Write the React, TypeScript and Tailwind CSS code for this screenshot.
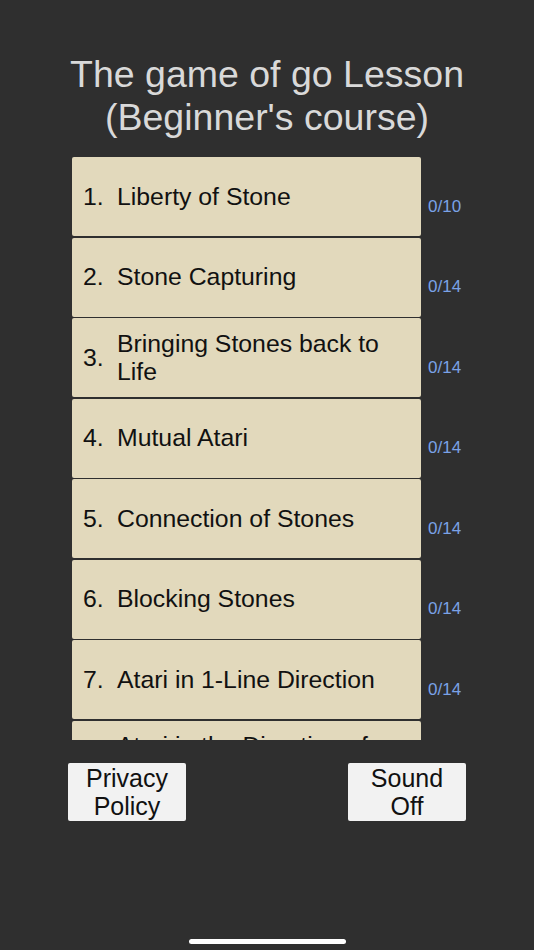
import React from 'react';

const LESSONS = [
  { no: 1, title: 'Liberty of Stone', progress: '0/10' },
  { no: 2, title: 'Stone Capturing', progress: '0/14' },
  { no: 3, title: 'Bringing Stones back to Life', progress: '0/14' },
  { no: 4, title: 'Mutual Atari', progress: '0/14' },
  { no: 5, title: 'Connection of Stones', progress: '0/14' },
  { no: 6, title: 'Blocking Stones', progress: '0/14' },
  { no: 7, title: 'Atari in 1-Line Direction', progress: '0/14' },
  { no: 8, title: 'Atari in the Direction of Escape', progress: '0/14' },
];

function App() {
  return (
    <div className="min-h-[950px] w-full bg-[#2f2f2f] font-['Liberation_Sans',Arial,sans-serif] flex flex-col">
      <h1 className="pt-[53px] text-center text-[37.5px] leading-[43px] text-[#d9d9d9]">
        The game of go Lesson
        <br />
        (Beginner's course)
      </h1>

      <div className="mt-[18px] ml-[72px] h-[583px] w-[420px] overflow-hidden">
        <div className="flex flex-col gap-[1.5px]">
          {LESSONS.map((lesson) => (
            <div key={lesson.no} className="flex">
              <button className="flex h-[79px] w-[349px] shrink-0 items-center rounded-[2px] bg-[#e2d9bc] pl-[11px] pr-3 text-left text-[24.8px] leading-[28px] text-[#111]">
                <span className="w-[34px] shrink-0">{lesson.no}.</span>
                <span>{lesson.title}</span>
              </button>
              <span className="self-center pt-[19px] pl-[7px] text-[17px] leading-[19px] text-[#7aa2e6]">
                {lesson.progress}
              </span>
            </div>
          ))}
        </div>
      </div>

      <div className="mt-[23px] flex justify-between pl-[68px] pr-[68px]">
        <button className="h-[58px] w-[118px] rounded-[2px] bg-[#f2f2f2] text-[25px] leading-[28px] text-[#111]">
          Privacy
          <br />
          Policy
        </button>
        <button className="h-[58px] w-[118px] rounded-[2px] bg-[#f2f2f2] text-[25px] leading-[28px] text-[#111]">
          Sound
          <br />
          Off
        </button>
      </div>

      <div className="mt-auto flex justify-center pb-[6px]">
        <div className="h-[5px] w-[157px] rounded-full bg-white" />
      </div>
    </div>
  );
}

export default App;
